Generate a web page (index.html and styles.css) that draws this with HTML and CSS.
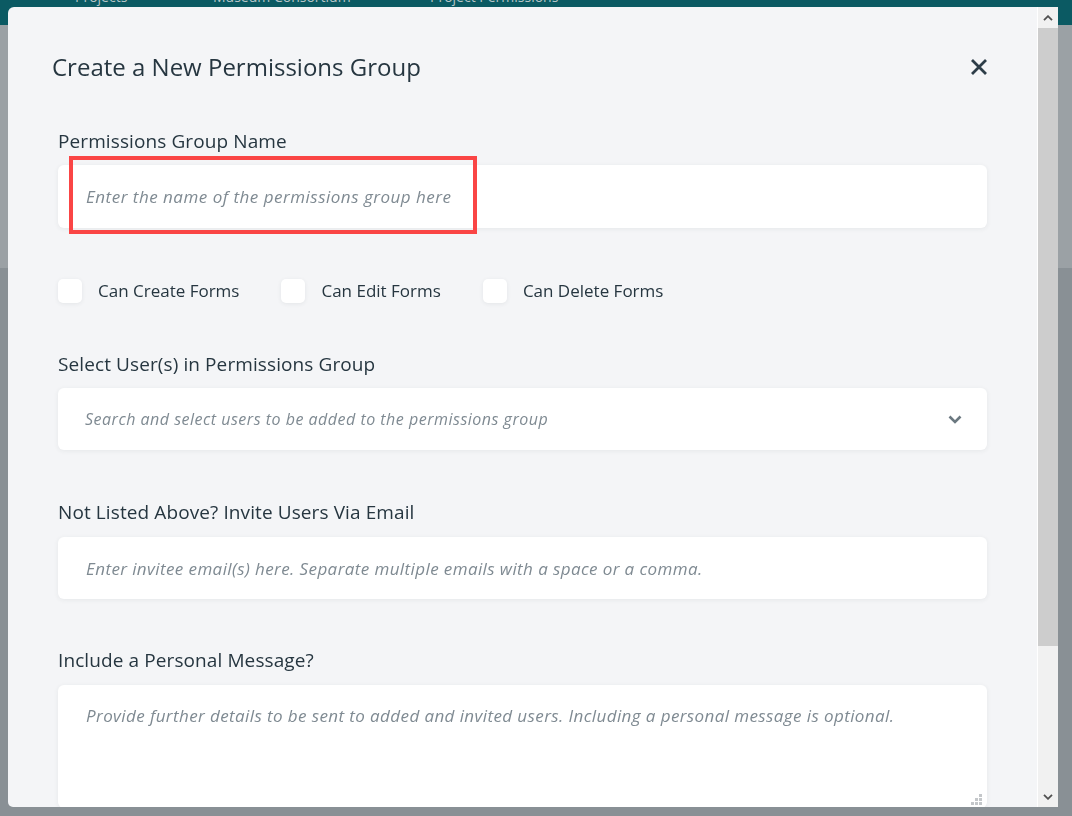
FILE: index.html
```html
<!DOCTYPE html>
<html lang="en">
<head>
<meta charset="utf-8">
<title>Create a New Permissions Group</title>
<link rel="stylesheet" href="styles.css">
</head>
<body>
<div class="page">
  <header class="topbar">
    <nav class="topnav">
      <span class="nav-item nav-projects">Projects</span>
      <span class="nav-item nav-museum">Museum Consortium</span>
      <span class="nav-item nav-perm">Project Permissions</span>
    </nav>
  </header>
  <div class="band"></div>
</div>

<div class="modal" role="dialog" aria-labelledby="modal-title">
  <div class="modal-scroll">
    <div class="modal-head">
      <h1 id="modal-title" class="modal-title">Create a New Permissions Group</h1>
      <button class="close-btn" type="button" aria-label="Close">
        <svg width="18" height="18" viewBox="0 0 18 18"><path d="M2 2 L16 16 M16 2 L2 16" stroke="#2d3d48" stroke-width="2.8" fill="none"/></svg>
      </button>
    </div>

    <form class="modal-body">
      <div class="field field-first">
        <label class="field-label" for="group-name">Permissions Group Name</label>
        <div class="input-wrap">
          <input id="group-name" class="text-input" type="text" placeholder="Enter the name of the permissions group here">
          <span class="highlight"></span>
        </div>
      </div>

      <div class="checks">
        <label class="check"><span class="check-box"></span><span class="check-text">Can Create Forms</span></label>
        <label class="check"><span class="check-box"></span><span class="check-text">Can Edit Forms</span></label>
        <label class="check"><span class="check-box"></span><span class="check-text">Can Delete Forms</span></label>
      </div>

      <div class="field field-select">
        <div class="field-label">Select User(s) in Permissions Group</div>
        <div class="select-box">
          <span class="placeholder placeholder-select">Search and select users to be added to the permissions group</span>
          <svg class="chevron" width="14" height="9" viewBox="0 0 14 9"><path d="M1.5 1.5 L7 7 L12.5 1.5" stroke="#6b7880" stroke-width="2.6" fill="none"/></svg>
        </div>
      </div>

      <div class="field field-invite">
        <label class="field-label" for="invite">Not Listed Above? Invite Users Via Email</label>
        <input id="invite" class="text-input text-input-invite" type="text" placeholder="Enter invitee email(s) here. Separate multiple emails with a space or a comma.">
      </div>

      <div class="field">
        <label class="field-label" for="message">Include a Personal Message?</label>
        <div class="textarea-wrap">
          <textarea id="message" class="text-area" placeholder="Provide further details to be sent to added and invited users. Including a personal message is optional."></textarea>
          <svg class="grip" width="11" height="11" viewBox="0 0 11 11" fill="#c4c7ca">
            <rect x="8" y="0" width="3" height="3"/>
            <rect x="4" y="4" width="3" height="3"/><rect x="8" y="4" width="3" height="3"/>
            <rect x="0" y="8" width="3" height="3"/><rect x="4" y="8" width="3" height="3"/><rect x="8" y="8" width="3" height="3"/>
          </svg>
        </div>
      </div>

      <div class="actions">
        <button type="button" class="btn btn-ghost">Cancel</button>
        <button type="button" class="btn btn-primary">Create Group</button>
      </div>
    </form>
  </div>

  <div class="scrollbar" aria-hidden="true">
    <div class="sb-btn">
      <svg width="10" height="6" viewBox="0 0 10 6"><path d="M1 5.2 L5 1.2 L9 5.2" stroke="#505050" stroke-width="1.8" fill="none"/></svg>
    </div>
    <div class="sb-thumb"></div>
    <div class="sb-track"></div>
    <div class="sb-btn">
      <svg width="10" height="6" viewBox="0 0 10 6"><path d="M1 0.8 L5 4.8 L9 0.8" stroke="#505050" stroke-width="1.8" fill="none"/></svg>
    </div>
  </div>
</div>
</body>
</html>
```

FILE: styles.css
```css
* { box-sizing: border-box; }

html, body {
  margin: 0;
  height: 100%;
  overflow: hidden;
}

body {
  background: #899095;
  font-family: "Open Sans", "Noto Sans", sans-serif;
  color: #263640;
}

.page { display: flex; flex-direction: column; }

.topbar {
  height: 25px;
  background: #0b5a63;
  overflow: hidden;
}

.topnav {
  display: flex;
  margin-top: -11px;
  padding-left: 75px;
  font-size: 14px;
  line-height: 15px;
  color: #b7c4c7;
}

.nav-projects { width: 138px; }
.nav-museum { width: 217px; }

.band {
  height: 243px;
  background: #9ba1a5;
}

/* Modal */
.modal {
  position: fixed;
  top: 7px;
  left: 8px;
  width: 1050px;
  height: 800px;
  display: flex;
}

.modal-scroll {
  flex: 1;
  overflow: hidden;
  background: #f4f5f7;
  border-radius: 6px 0 0 5px;
}

.scrollbar {
  width: 21px;
  flex: none;
  display: flex;
  flex-direction: column;
  background: #f1f1f1;
  border-left: 1px solid #ffffff;
}

.sb-btn {
  height: 21px;
  display: flex;
  align-items: center;
  justify-content: center;
}

.sb-thumb {
  height: 618px;
  background: #cdcdcd;
}

.sb-track { flex: 1; }

.modal-head {
  display: flex;
  align-items: center;
  justify-content: space-between;
  padding: 45px 49px 0 44px;
}

.modal-title {
  margin: 0;
  font-size: 24px;
  line-height: 30px;
  font-weight: 400;
  color: #263640;
}

.close-btn {
  border: 0;
  padding: 0;
  background: none;
  width: 18px;
  height: 18px;
  display: flex;
}

.modal-body {
  padding: 0 50px 60px;
}

.field { margin-top: 49px; }
.field-first { margin-top: 47px; }
.field-invite { margin-top: 50px; }

.field-label {
  display: block;
  font-size: 19px;
  letter-spacing: 0.1px;
  line-height: 24px;
  margin-bottom: 13px;
  color: #263640;
}

.field-first .field-label,
.field-select .field-label { margin-bottom: 12px; }

.input-wrap { position: relative; }

.text-input,
.select-box,
.text-area {
  display: block;
  width: 100%;
  border: 0;
  background: #ffffff;
  border-radius: 6px;
  box-shadow: 0 1px 5px rgba(40, 50, 60, 0.07);
  font-family: inherit;
  font-size: 17px;
  letter-spacing: 0.4px;
  color: #263640;
  outline: none;
}

.text-input {
  height: 63px;
  padding: 0 28px;
}

.text-input-invite { height: 62px; }

.text-input::placeholder,
.text-area::placeholder,
.placeholder {
  font-style: italic;
  color: #7f8a92;
}

#group-name::placeholder { letter-spacing: 0.5px; }

.highlight {
  position: absolute;
  left: 11px;
  top: -9px;
  width: 408px;
  height: 78px;
  border: 4px solid #fa4545;
  pointer-events: none;
}

.checks {
  display: flex;
  gap: 42px;
  margin-top: 51px;
  height: 24px;
  align-items: center;
}

.check {
  display: flex;
  align-items: center;
  gap: 16px;
  font-size: 17px;
  line-height: 22px;
}

.check-text { margin-top: -1px; }

.check-box {
  width: 24px;
  height: 24px;
  background: #ffffff;
  border-radius: 5px;
  box-shadow: 0 1px 4px rgba(40, 50, 60, 0.08);
}

.select-box {
  height: 62px;
  padding: 0 25px 0 27px;
  display: flex;
  align-items: center;
  justify-content: space-between;
}

.placeholder-select {
  font-size: 16px;
  letter-spacing: 0.5px;
}

.chevron { flex: none; }

.textarea-wrap { position: relative; }

.text-area {
  height: 123px;
  padding: 20px 28px;
  resize: none;
  line-height: 22px;
}

.grip {
  position: absolute;
  right: 5px;
  bottom: 3px;
}

.actions {
  display: flex;
  justify-content: flex-end;
  gap: 16px;
  margin-top: 40px;
}

.btn {
  font-family: inherit;
  font-size: 16px;
  height: 44px;
  padding: 0 24px;
  border-radius: 6px;
  border: 0;
}

.btn-ghost { background: transparent; color: #263640; }
.btn-primary { background: #0b5a63; color: #ffffff; }
```
